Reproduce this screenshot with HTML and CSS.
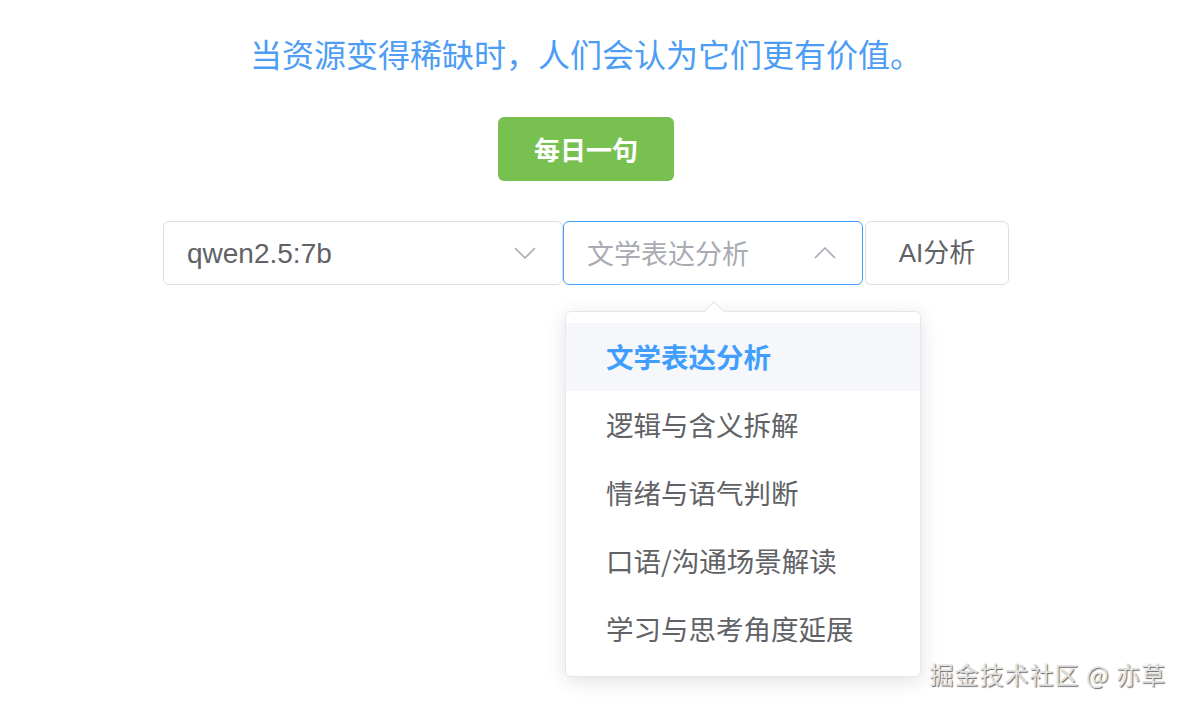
FILE: index.html
```html
<!DOCTYPE html>
<html lang="zh-CN">
<head>
<meta charset="utf-8">
<title>每日一句</title>
<link rel="stylesheet" href="styles.css">
</head>
<body>
<main class="page">
  <p class="quote">当资源变得稀缺时，人们会认为它们更有价值。</p>
  <button class="btn-daily">每日一句</button>
  <div class="controls">
    <div class="select select-model">
      <span class="select-value">qwen2.5:7b</span>
      <svg class="chevron" width="22" height="12" viewBox="0 0 22 12"><path d="M1 1 L11 11 L21 1" fill="none" stroke="#a8abb2" stroke-width="1.6"/></svg>
    </div>
    <div class="select select-mode is-open">
      <span class="select-placeholder">文学表达分析</span>
      <svg class="chevron" width="22" height="12" viewBox="0 0 22 12"><path d="M1 11 L11 1 L21 11" fill="none" stroke="#a8abb2" stroke-width="1.6"/></svg>
      <div class="dropdown">
        <span class="dropdown-arrow"></span>
        <ul class="dropdown-list">
          <li class="dropdown-item is-selected">文学表达分析</li>
          <li class="dropdown-item">逻辑与含义拆解</li>
          <li class="dropdown-item">情绪与语气判断</li>
          <li class="dropdown-item">口语/沟通场景解读</li>
          <li class="dropdown-item">学习与思考角度延展</li>
        </ul>
      </div>
    </div>
    <button class="btn-ai">AI分析</button>
  </div>
</main>
<div class="watermark">掘金技术社区 @ 亦草</div>
</body>
</html>
```

FILE: styles.css
```css
* { box-sizing: border-box; }
html, body { margin: 0; padding: 0; background: #fff; }
body {
  width: 1186px;
  height: 708px;
  overflow: hidden;
  font-family: "Liberation Sans", "Noto Sans CJK SC", sans-serif;
  position: relative;
}
.page {
  width: 1172px;
  display: flex;
  flex-direction: column;
  align-items: center;
  padding-top: 29px;
}
.quote {
  margin: 0;
  font-size: 32px;
  line-height: 48px;
  color: #4d9df4;
  font-family: "Noto Sans CJK SC", sans-serif;
}
.btn-daily {
  margin-top: 40px;
  width: 176px;
  height: 64px;
  border: none;
  border-radius: 6px;
  background: #78c050;
  color: #fff;
  font-family: "Noto Sans CJK SC", sans-serif;
  font-size: 26px;
  font-weight: 700;
  padding: 0 0 2px;
}
.controls {
  margin-top: 40px;
  display: flex;
  align-items: center;
}
.select {
  position: relative;
  height: 64px;
  border: 1px solid #dcdfe6;
  border-radius: 6px;
  display: flex;
  align-items: center;
  justify-content: space-between;
  padding: 0 26px 0 23px;
  background: #fff;
}
.select-model { width: 400px; }
.select-mode { width: 300px; margin-left: 0; }
.select-mode.is-open { border-color: #409eff; }
.select-value {
  font-size: 28px;
  color: #606266;
  padding-top: 2px;
}
.select-placeholder {
  font-family: "Noto Sans CJK SC", sans-serif;
  font-size: 27px;
  color: #a8abb2;
  padding-bottom: 1px;
}
.chevron { display: block; }
.btn-ai {
  margin-left: 2px;
  width: 144px;
  height: 64px;
  border: 1px solid #dcdfe6;
  border-radius: 6px;
  background: #fff;
  color: #606266;
  font-family: "Liberation Sans", "Noto Sans CJK SC", sans-serif;
  font-size: 26px;
  padding: 0 0 5px;
}
.dropdown {
  position: absolute;
  top: 89px;
  left: 1px;
  width: 356px;
  background: #fff;
  border: 1px solid #e4e7ed;
  border-radius: 6px;
  box-shadow: 0 4px 20px rgba(0, 0, 0, 0.12);
  z-index: 10;
}
.dropdown-arrow {
  position: absolute;
  top: -8px;
  left: 141px;
  width: 14px;
  height: 14px;
  background: #fff;
  border-top: 1px solid #e4e7ed;
  border-left: 1px solid #e4e7ed;
  transform: rotate(45deg);
}
.dropdown-list {
  list-style: none;
  margin: 0;
  padding: 11px 0 13px;
  position: relative;
}
.dropdown-item {
  height: 68px;
  line-height: 66px;
  padding-left: 40px;
  font-family: "Noto Sans CJK SC", sans-serif;
  font-size: 27.5px;
  color: #606266;
}
.dropdown-item.is-selected {
  background: #f5f7fa;
  color: #409eff;
  font-weight: 700;
}
.watermark {
  position: absolute;
  right: 20px;
  bottom: 19px;
  font-family: "Noto Sans CJK SC", sans-serif;
  font-size: 24px;
  letter-spacing: 1px;
  line-height: 30px;
  color: #e2e2e2;
  text-shadow: 1px 1px 1px rgba(0, 0, 0, 0.6);
}
```
